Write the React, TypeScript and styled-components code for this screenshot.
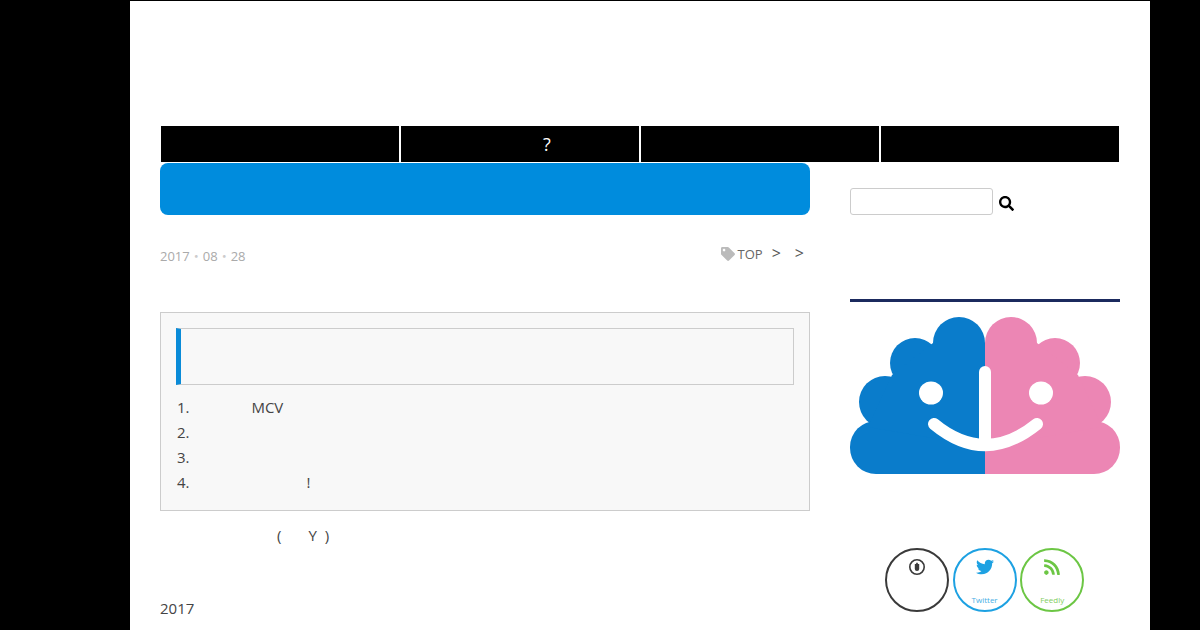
import React from 'react'
import styled, { createGlobalStyle } from 'styled-components'
import { FaRss, FaSearch, FaTag, FaTwitter } from 'react-icons/fa'

const GlobalStyle = createGlobalStyle`
  html, body {
    margin: 0;
    background: #000;
    height: 630px;
    overflow: hidden;
    font-family: 'Open Sans', 'Noto Sans CJK JP', sans-serif;
    color: #333;
  }
`

const Wrapper = styled.div`
  box-sizing: border-box;
  width: 1020px;
  height: 630px;
  margin-left: 130px;
  padding: 0 30px;
  border-top: 1px solid #000;
  background: #fff;
  overflow: hidden;
`

const Header = styled.header`
  height: 124px;
`

const Nav = styled.nav`
  display: grid;
  grid-template-columns: repeat(4, 240px);
  height: 38px;
`

const NavItem = styled.a`
  display: flex;
  align-items: center;
  justify-content: center;
  box-sizing: border-box;
  border: 1px solid #fff;
  background: #000;
  color: #fff;
  font-size: 18px;
`

const Columns = styled.div`
  display: grid;
  grid-template-columns: 650px 270px;
  column-gap: 40px;
`

const Main = styled.main`
  min-width: 0;
`

const Title = styled.h1`
  height: 52px;
  margin: 0;
  border-radius: 8px;
  background: #008cdd;
`

const Meta = styled.div`
  display: flex;
  justify-content: space-between;
  height: 20px;
  margin-top: 30px;
`

const PostDate = styled.time`
  display: block;
  height: 20px;
  margin-top: 1px;
  color: #aaa;
  font-size: 13px;
  line-height: 20px;
`

const Dot = styled.span`
  color: #ccc;
`

const Breadcrumb = styled.div`
  display: flex;
  align-items: center;
  height: 18px;
  padding-right: 6px;
  color: #666;
  font-size: 13px;
  line-height: 18px;

  svg {
    width: 14px;
    height: 14px;
    margin-right: 3px;
    color: #bbb;
  }
`

const Crumb = styled.span`
  margin-left: 9px;
  margin-top: -2px;
  color: #555;
  font-size: 16px;
`

const Contents = styled.section`
  box-sizing: border-box;
  height: 199px;
  margin-top: 47px;
  padding: 15px;
  border: 1px solid #ccc;
  background: #f8f8f8;
`

const ContentsTitle = styled.div`
  box-sizing: border-box;
  height: 57px;
  border: 1px solid #ccc;
  border-left: 5px solid #0a8bd8;
`

const ContentsList = styled.ol`
  margin: 10px 0 0 1px;
  padding: 0;
  list-style: decimal inside;
  font-size: 15px;
  line-height: 25px;
  color: #444;
`

const Blank = styled.span<{ $width: number }>`
  display: inline-block;
  width: ${({ $width }) => $width}px;
`

const Paragraph = styled.p`
  margin: 12px 0 0;
  font-size: 15px;
  line-height: 25px;
  color: #444;
`

const YearHeading = styled(Paragraph)`
  margin-top: 48px;
`

const Sidebar = styled.aside`
  min-width: 0;
`

const SearchForm = styled.form`
  display: flex;
  align-items: center;
  margin-top: 25px;

  svg {
    width: 15px;
    height: 15px;
    margin: 3px 0 0 6px;
    color: #000;
  }
`

const SearchInput = styled.input`
  box-sizing: border-box;
  width: 143px;
  height: 27px;
  border: 1px solid #ccc;
  border-radius: 3px;
  background: #fff;
`

const Rule = styled.hr`
  height: 3px;
  margin: 84px 0 15px;
  border: 0;
  background: #1b2a5e;
`

const Logo = styled.svg`
  display: block;
  width: 270px;
  height: 157px;
`

const SocialRow = styled.div`
  display: flex;
  gap: 3.6px;
  margin-top: 74px;
  padding-left: 35px;
`

const SocialButton = styled.a<{ $color: string }>`
  display: flex;
  flex-direction: column;
  align-items: center;
  box-sizing: border-box;
  width: 64px;
  height: 64px;
  padding: 8px 0 4px;
  border: 2px solid ${({ $color }) => $color};
  border-radius: 50%;
  color: ${({ $color }) => $color};

  svg {
    width: 18px;
    height: 18px;
  }
`

const SocialLabel = styled.span`
  margin-top: auto;
  font-size: 8px;
  line-height: 12px;
  opacity: 0.85;
`

// half of the cloud, the other half is the same shape mirrored
const CloudHalf = () => (
  <>
    <circle cx="109" cy="26" r="26" />
    <circle cx="65" cy="46" r="25" />
    <circle cx="35" cy="85" r="26" />
    <rect x="0" y="104" width="160" height="53" rx="26" />
    <polygon points="18,110 42,58 83,26 135,26 135,130" />
  </>
)

const CloudLogo = () => (
  <Logo viewBox="0 0 270 157">
    <defs>
      <clipPath id="half">
        <rect x="0" y="0" width="135" height="157" />
      </clipPath>
    </defs>
    <g clipPath="url(#half)" fill="#0a7ccb">
      <CloudHalf />
    </g>
    <g transform="matrix(-1 0 0 1 270 0)">
      <g clipPath="url(#half)" fill="#ec86b4">
        <CloudHalf />
      </g>
    </g>
    <ellipse cx="81" cy="76" rx="12" ry="11.5" fill="#fff" />
    <ellipse cx="191" cy="76" rx="12" ry="11.5" fill="#fff" />
    <path d="M84 107 Q135 149 187 107" fill="none" stroke="#fff" strokeWidth="12" strokeLinecap="round" />
    <path d="M135 55 V126" fill="none" stroke="#fff" strokeWidth="12" strokeLinecap="round" />
  </Logo>
)

const PocketIcon = () => (
  <svg viewBox="0 0 18 18">
    <circle cx="9" cy="9" r="7.2" fill="none" stroke="currentColor" strokeWidth="1.6" />
    <path d="M9 4.2 L10.2 6 H11.2 V11 Q11.2 13 9 13 Q6.8 13 6.8 11 V6 H7.8 Z" fill="currentColor" />
  </svg>
)

const App = () => (
  <>
    <GlobalStyle />
    <Wrapper>
      <Header />
      <Nav>
        <NavItem />
        <NavItem>
          <Blank $width={54} />?
        </NavItem>
        <NavItem />
        <NavItem />
      </Nav>
      <Columns>
        <Main>
          <Title />
          <Meta>
            <PostDate>
              2017<Dot>・</Dot>08<Dot>・</Dot>28
            </PostDate>
            <Breadcrumb>
              <FaTag />
              TOP
              <Crumb>&gt;</Crumb>
              <Crumb>
                <Blank $width={5} />&gt;
              </Crumb>
            </Breadcrumb>
          </Meta>
          <Contents>
            <ContentsTitle />
            <ContentsList>
              <li>
                <Blank $width={58} />MCV
              </li>
              <li />
              <li />
              <li>
                <Blank $width={113} />!
              </li>
            </ContentsList>
          </Contents>
          <Paragraph>
            <Blank $width={117} />(<Blank $width={27} />Y<Blank $width={8} />)
          </Paragraph>
          <YearHeading>2017</YearHeading>
        </Main>
        <Sidebar>
          <SearchForm>
            <SearchInput />
            <FaSearch />
          </SearchForm>
          <Rule />
          <CloudLogo />
          <SocialRow>
            <SocialButton $color="#3a3a3a">
              <PocketIcon />
            </SocialButton>
            <SocialButton $color="#1da1e2">
              <FaTwitter />
              <SocialLabel>Twitter</SocialLabel>
            </SocialButton>
            <SocialButton $color="#6cc644">
              <FaRss />
              <SocialLabel>Feedly</SocialLabel>
            </SocialButton>
          </SocialRow>
        </Sidebar>
      </Columns>
    </Wrapper>
  </>
)

export default App
